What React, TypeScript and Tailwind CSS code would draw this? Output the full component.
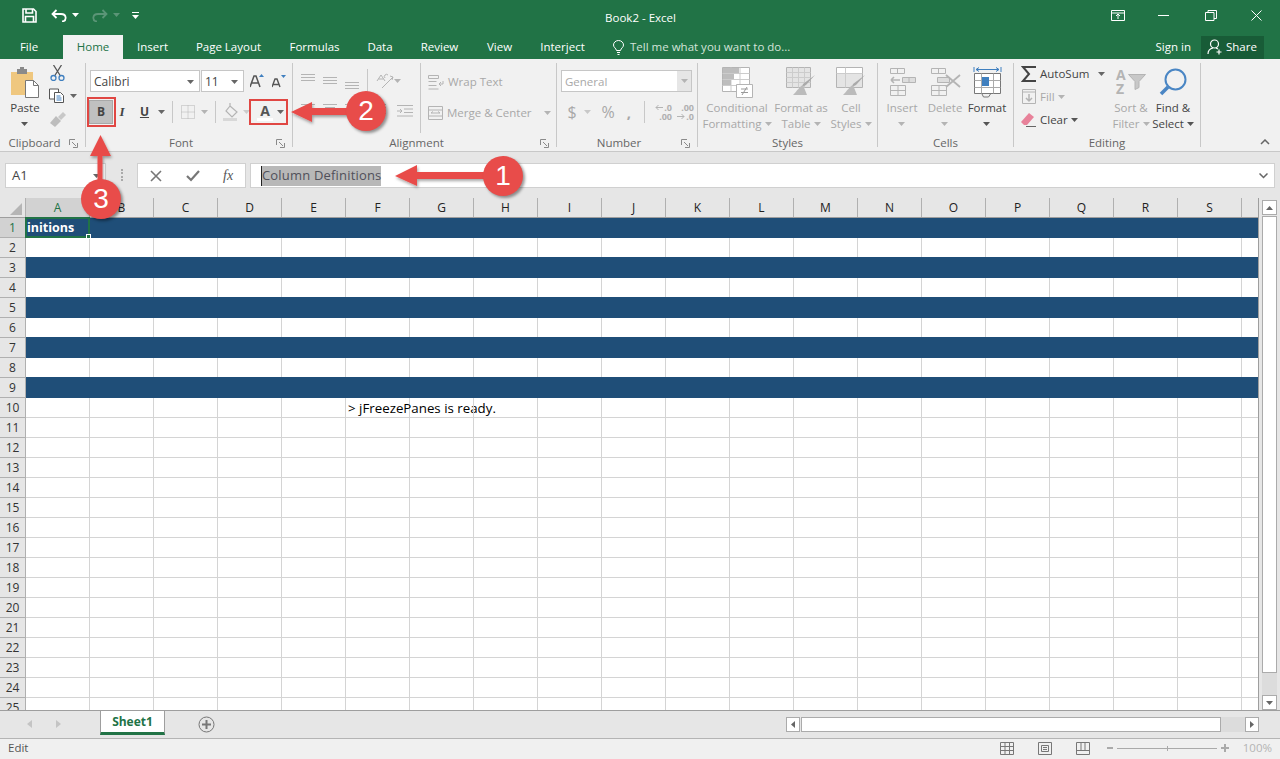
import type { ReactNode } from "react";

const UI = "font-['Open_Sans',sans-serif]";
const GREY = "#b4b4b4";
const COLS = "ABCDEFGHIJKLMNOPQRS".split("");
const ROWS = Array.from({ length: 25 }, (_, i) => i + 1);

function Caret({ color = "#666", className = "" }: { color?: string; className?: string }) {
  return (
    <svg width="7" height="4" viewBox="0 0 7 4" className={`shrink-0 ${className}`}>
      <path d="M0 0h7L3.500 4z" fill={color} />
    </svg>
  );
}

function Launcher() {
  return (
    <svg width="9" height="9" viewBox="0 0 9 9" fill="none" stroke="#8a8a8a">
      <path d="M.5 6V.5H6" />
      <path d="M3 3l4 4M8.500 4v4.500H4" />
    </svg>
  );
}

function Group({ w, label, launcher, children }: { w: string; label: string; launcher?: boolean; children: ReactNode }) {
  return (
    <div className={`${w} flex flex-col shrink-0`}>
      <div className="h-[76px] flex">{children}</div>
      {launcher ? (
        <div className="grid grid-cols-[1fr_16px] items-center h-[16px]">
          <span className="text-center text-[11.500px] text-[#666] leading-none">{label}</span>
          <span className="flex">
            <Launcher />
          </span>
        </div>
      ) : (
        <div className="h-[16px] flex items-center justify-center text-[11.500px] text-[#666] leading-none">{label}</div>
      )}
    </div>
  );
}

function Sep() {
  return <div className="w-px h-[84px] mt-[4px] bg-[#c8c8c8] shrink-0" />;
}

function BigButton({ w, icon, lines, dim, caretLine }: { w: string; icon: ReactNode; lines: string[]; dim?: boolean; caretLine?: boolean }) {
  const color = dim ? "text-[#a8a8a8]" : "text-[#444]";
  const caret = dim ? "#b4b4b4" : "#555";
  return (
    <div className={`${w} flex flex-col items-center shrink-0 pt-[5px]`}>
      <div className="h-[36px] flex items-center justify-center">{icon}</div>
      <div className={`text-[11.500px] leading-[16px] text-center whitespace-nowrap ${color}`}>
        <div>{lines[0]}</div>
        {caretLine ? (
          <div className="h-[16px] flex items-center justify-center">
            <Caret color={caret} />
          </div>
        ) : (
          <div className="flex items-center justify-center gap-[3px]">
            {lines[1]}
            <Caret color={caret} />
          </div>
        )}
      </div>
    </div>
  );
}

function TitleBar() {
  return (
    <div className="h-[35px] flex items-center">
      <div className="flex items-center pl-[22px] h-full pb-[5px]">
        <svg width="15" height="15" viewBox="0 0 15 15" fill="none" stroke="#fff" strokeWidth="1.600">
          <path d="M1 1h10.500L14 3.500V14H1z" />
          <path d="M4 1v4h6.500V1M3.500 14V8.500h8V14" />
        </svg>
        <svg width="16" height="13" viewBox="0 0 16 13" fill="none" stroke="#fff" strokeWidth="1.800" className="ml-[14px]">
          <path d="M5.500 1L1.500 5l4 4M2 5h8c6 0 6 7 1 7.500" />
        </svg>
        <Caret color="#fff" className="ml-[5px]" />
        <svg width="16" height="13" viewBox="0 0 16 13" fill="none" stroke="#5b9577" strokeWidth="1.800" className="ml-[13px]">
          <path d="M10.500 1l4 4-4 4M14 5H6c-6 0-6 7-1 7.500" />
        </svg>
        <Caret color="#5b9577" className="ml-[5px]" />
        <svg width="7" height="7" viewBox="0 0 7 7" className="ml-[12px]" fill="#fff">
          <path d="M0 0h7v1H0zM0 3h7L3.500 7z" />
        </svg>
      </div>
      <div className="flex-1 text-center text-white text-[11.500px] pl-[31px]">Book2 - Excel</div>
      <div className="flex items-center pb-[5px]">
        <svg width="14" height="11" viewBox="0 0 14 11" fill="none" stroke="#fff">
          <path d="M.5.500h13v10H.500zM.5 3h13M7 9V4.500M5 6l2-2 2 2" />
        </svg>
        <div className="ml-[33px] w-[11px] h-px bg-white" />
        <svg width="12" height="11" viewBox="0 0 12 11" fill="none" stroke="#fff" className="ml-[36px]">
          <path d="M.5 2.500h8.500v8H.5zM3 2.500V.5h8.500v8H9" />
        </svg>
        <svg width="11" height="11" viewBox="0 0 11 11" fill="none" stroke="#fff" className="ml-[34px] mr-[18px]">
          <path d="M.5.500l10 10M10.500.500l-10 10" />
        </svg>
      </div>
    </div>
  );
}

function TabBar() {
  const tabs: [string, string][] = [
    ["Insert", "w-[59px]"],
    ["Page Layout", "w-[93px]"],
    ["Formulas", "w-[79px]"],
    ["Data", "w-[52px]"],
    ["Review", "w-[67px]"],
    ["View", "w-[53px]"],
    ["Interject", "w-[73px]"],
  ];
  return (
    <div className="h-[24px] flex items-center text-[11.500px] text-white">
      <div className="w-[58px] text-center">File</div>
      <div className="w-[60px] ml-[5px] h-full flex items-center justify-center bg-[#f1f1f1] text-[#217346]">Home</div>
      {tabs.map(([t, w]) => (
        <div key={t} className={`${w} text-center`}>
          {t}
        </div>
      ))}
      <svg width="11" height="15" viewBox="0 0 11 15" fill="none" stroke="#fff" className="ml-[14px]">
        <path d="M3.500 10.500C3 8 .5 7.500.5 5a5 4.500 0 0 1 10 0c0 2.500-2.500 3-3 5.500zM4 12.500h3M4.500 14.500h2" />
      </svg>
      <div className="ml-[6px] text-[#d4e4da]">Tell me what you want to do...</div>
      <div className="flex-1" />
      <div>Sign in</div>
      <div className="w-[63px] h-[23px] ml-[10px] mr-[16px] bg-[#185c37] flex items-center gap-[3px] pl-[6px]">
        <svg width="16" height="16" viewBox="0 0 16 16" fill="none" stroke="#fff" strokeWidth="1.200">
          <circle cx="7.500" cy="5" r="4" />
          <path d="M1 15c0-3.500 2.500-5.500 5-6M9 9l2 1M12 10.500v5M9.500 13h5" />
        </svg>
        Share
      </div>
    </div>
  );
}

function PasteIcon() {
  return (
    <svg width="30" height="31" viewBox="0 0 30 31">
      <path d="M1 5h22v23H1z" fill="#efc77f" />
      <path d="M7 2h10v5H7z" fill="#8a8a8a" />
      <path d="M10 0h4v3h-4z" fill="#8a8a8a" />
      <path d="M15.500 13.500h8l5 5v12h-13z" fill="#fff" stroke="#777" />
      <path d="M23.500 13.500v5h5" fill="none" stroke="#777" />
    </svg>
  );
}

function Clipboard() {
  return (
    <Group w="w-[85px]" label="Clipboard" launcher>
      <BigButton w="w-[44px] ml-[3px]" icon={<PasteIcon />} lines={["Paste", ""]} caretLine />
      <div className="flex flex-col pl-[2px] pt-[6px]">
        <svg width="15" height="16" viewBox="0 0 15 16" fill="none" className="ml-px">
          <path d="M3.500 0l7 11M11.500 0l-7 11" stroke="#555" strokeWidth="1.300" />
          <circle cx="3.500" cy="13" r="2.500" stroke="#3f7fbf" strokeWidth="1.300" />
          <circle cx="11.500" cy="13" r="2.500" stroke="#3f7fbf" strokeWidth="1.300" />
        </svg>
        <div className="flex items-center mt-[7px]">
          <svg width="16" height="15" viewBox="0 0 16 15" fill="#fff" stroke="#555">
            <path d="M.5 1h9v10h-9z" />
            <path d="M5.500 4.500h6l3 3v7h-9z" />
            <path d="M7.500 8h4M7.500 10h5M7.500 12h5" stroke="#3f7fbf" />
          </svg>
          <Caret className="ml-[5px]" />
        </div>
        <svg width="17" height="15" viewBox="0 0 17 15" className="mt-[9px]" fill="#bdbdbd">
          <path d="M9 5l5-5 3 3-5 5z" fill="#c8c8c8" />
          <path d="M1 11l6-7 5 5-6 6z" />
        </svg>
      </div>
    </Group>
  );
}

function FontGroup() {
  return (
    <Group w="w-[206px]" label="Font" launcher>
      <div className="flex flex-col pt-[11px]">
        <div className="flex items-center pl-[4px] h-[22px]">
          <div className="w-[110px] h-full bg-white border border-[#c6c6c6] flex items-center justify-between pl-[3px] pr-[5px] pt-px text-[12px] text-[#444]">
            Calibri
            <Caret />
          </div>
          <div className="w-[43px] h-full ml-px bg-white border border-[#c6c6c6] flex items-center justify-between pl-[3px] pr-[5px] pt-px text-[12px] text-[#444]">
            11
            <Caret />
          </div>
          <svg width="14" height="14" viewBox="0 0 14 14" className="ml-[6px]">
            <path d="M0 13L4 2h2l4 11M2 9h6" fill="none" stroke="#555" strokeWidth="1.500" />
            <path d="M9 3l2.500-3L14 3z" fill="#3f7fbf" />
          </svg>
          <svg width="14" height="13" viewBox="0 0 14 13" className="ml-[8px]">
            <path d="M0 12L3 4h2l3 8M1.500 9.500h5" fill="none" stroke="#555" strokeWidth="1.400" />
            <path d="M9 0h5l-2.500 3z" fill="#3f7fbf" />
          </svg>
        </div>
        <div className="flex items-center pl-[3px] h-[26px] mt-[7px]">
          <div className="w-[24px] h-[24px] bg-[#c0c0c0] border border-[#a8a8a8] flex items-center justify-center text-[12px] font-bold text-[#444]">
            B
          </div>
          <span className="w-[18px] text-center text-[13px] italic text-[#444] font-['Liberation_Serif',serif] font-bold">I</span>
          <span className="w-[27px] text-center text-[12px] font-bold underline text-[#444]">U</span>
          <Caret />
          <div className="w-px h-[22px] bg-[#c8c8c8] ml-[7px]" />
          <svg width="14" height="14" viewBox="0 0 14 14" fill="none" stroke={GREY} strokeDasharray="1 1" className="ml-[8px]">
            <path d="M.5.500h13v13H.500zM7 .5v13M.5 7h13" />
          </svg>
          <Caret color={GREY} className="ml-[6px]" />
          <div className="w-px h-[22px] bg-[#c8c8c8] ml-[7px]" />
          <svg width="17" height="18" viewBox="0 0 17 18" className="ml-[7px]" fill="none">
            <path d="M7 3l7 6-5 5-6-6zM7 3V0" stroke={GREY} strokeWidth="1.200" />
            <path d="M0 15h14v3H0z" fill="#d8d8d8" />
          </svg>
          <Caret color="#ccc" className="ml-[3px]" />
          <div className="ml-[3px] w-[24px] flex flex-col items-center text-[14px] leading-[15px] font-bold text-[#555]">
            A
            <div className="w-[16px] h-[3px] bg-white" />
          </div>
          <Caret />
        </div>
      </div>
    </Group>
  );
}

function AlignLines({ rows, className = "" }: { rows: [number, number, number][]; className?: string }) {
  return (
    <svg width="14" height="17" viewBox="0 0 14 17" stroke={GREY} className={`shrink-0 ${className}`}>
      {rows.map(([y, a, b]) => (
        <path key={y} d={`M${a} ${y + 0.5}H${b}`} />
      ))}
    </svg>
  );
}

function AlignmentGroup() {
  const line = (a: number, b: number, c: number) =>
    [
      [a, 0, 14],
      [b, 0, 14],
      [c, 0, 14],
    ] as [number, number, number][];
  return (
    <Group w="w-[263px]" label="Alignment" launcher>
      <div className="w-[127px] pl-[8px] pt-[13px] shrink-0">
        <div className="flex items-center h-[17px]">
          <AlignLines rows={line(2, 5, 8)} />
          <AlignLines rows={line(5, 8, 11)} className="ml-[8px]" />
          <AlignLines rows={line(10, 13, 16)} className="ml-[8px]" />
          <div className="w-px h-[24px] bg-[#c8c8c8] ml-[8px] shrink-0" />
          <svg width="18" height="17" viewBox="0 0 18 17" fill="none" stroke={GREY} className="ml-[8px] shrink-0">
            <path d="M1 9l4-6 4 6M2.500 7h5M9 6a2 2 0 1 1 3-3" />
            <path d="M6 16L17 5M14 4l3 1-1 3" />
          </svg>
          <Caret color={GREY} />
        </div>
        <div className="flex items-center h-[14px] mt-[15px]">
          <AlignLines rows={[[1, 0, 14], [4, 0, 10], [7, 0, 14], [10, 0, 10]]} />
          <AlignLines rows={[[1, 0, 14], [4, 2, 12], [7, 0, 14], [10, 2, 12]]} className="ml-[8px]" />
          <AlignLines rows={[[1, 0, 14], [4, 4, 14], [7, 0, 14], [10, 4, 14]]} className="ml-[8px]" />
          <AlignLines rows={[[1, 0, 14], [4, 6, 14], [7, 6, 14], [10, 0, 14]]} className="ml-[13px]" />
          <svg width="16" height="14" viewBox="0 0 16 14" fill="none" stroke={GREY} className="ml-[11px] shrink-0">
            <path d="M0 1.500h16M7 5h9M7 8.500h9M0 12h16M0 7h5M3 5l2 2-2 2" />
          </svg>
        </div>
      </div>
      <div className="w-px h-[70px] mt-[4px] bg-[#c8c8c8] shrink-0" />
      <div className="flex flex-col pl-[7px] pt-[13px] text-[11.500px] text-[#a8a8a8]">
        <div className="flex items-center gap-[4px] h-[20px]">
          <svg width="16" height="15" viewBox="0 0 16 15" fill="none" stroke={GREY}>
            <path d="M.5.500h10v3H.500zM.5 6.500h8M.5 10.500h8M.5 14h10M15 6v3h-4M13 7l-2 2 2 2" />
          </svg>
          Wrap Text
        </div>
        <div className="flex items-center gap-[4px] h-[20px] mt-[11px]">
          <svg width="15" height="14" viewBox="0 0 15 14" fill="none" stroke={GREY}>
            <path d="M.5.500h14v13H.500zM.5 4h14M.5 10h14M3 7h9M3 7l2-1.500M12 7l-2-1.500" />
          </svg>
          Merge &amp; Center
          <Caret color={GREY} className="ml-[8px]" />
        </div>
      </div>
    </Group>
  );
}

function DecimalIcon({ top, bottom, arrowTop }: { top: string; bottom: string; arrowTop: boolean }) {
  const arrow = (
    <svg width="8" height="7" viewBox="0 0 8 7" fill="none" stroke={GREY} className="shrink-0">
      {arrowTop ? <path d="M8 3.500H1M3.500 1L1 3.500 3.500 6" /> : <path d="M0 3.500h7M4.500 1L7 3.500 4.500 6" />}
    </svg>
  );
  return (
    <div className="w-[20px] flex flex-col items-end text-[9px] leading-[8px] font-bold text-[#b0b0b0]">
      <div className="flex items-center gap-px">
        {arrowTop && arrow}
        {top}
      </div>
      <div className="flex items-center gap-px mt-px">
        {!arrowTop && arrow}
        {bottom}
      </div>
    </div>
  );
}

function NumberGroup() {
  return (
    <Group w="w-[140px]" label="Number" launcher>
      <div className="flex flex-col pl-[4px] pt-[11px] text-[#a8a8a8]">
        <div className="w-[131px] h-[22px] bg-white border border-[#c6c6c6] flex items-center justify-between pl-[3px] text-[11.500px]">
          <span className="pt-px">General</span>
          <div className="w-[14px] h-full bg-[#e6e6e6] flex items-center justify-center">
            <Caret color={GREY} />
          </div>
        </div>
        <div className="flex items-center h-[24px] mt-[8px]">
          <span className="w-[22px] text-center text-[16px]">$</span>
          <Caret color="#c8c8c8" className="ml-px" />
          <span className="w-[30px] ml-[2px] text-center text-[16px]">%</span>
          <span className="w-[12px] text-center text-[15px] font-bold">,</span>
          <div className="w-px h-[22px] bg-[#c8c8c8] ml-[9px]" />
          <div className="ml-[7px]">
            <DecimalIcon top=".0" bottom=".00" arrowTop />
          </div>
          <div className="ml-[2px]">
            <DecimalIcon top=".00" bottom=".0" arrowTop={false} />
          </div>
        </div>
      </div>
    </Group>
  );
}

function CondIcon() {
  return (
    <svg width="31" height="31" viewBox="0 0 31 31">
      <path d="M.5.500h27v24H.500z" fill="#fff" stroke={GREY} />
      <path d="M9 .5v24M18 .5v24M.5 6.500h27M.5 12.500h27M.5 18.500h27" stroke="#ccc" />
      <path d="M1 1h16v5H1zM1 7h11v5H1zM1 13h8v5H1z" fill="#bdbdbd" />
      <path d="M14.500 17.500h16v13h-16z" fill="#fff" stroke={GREY} />
      <path d="M19 22h7M19 25.500h7M25 20l-5 8" stroke="#999" fill="none" />
    </svg>
  );
}

function TableIcon() {
  return (
    <svg width="30" height="30" viewBox="0 0 30 30">
      <path d="M.5.500h24v20H.500z" fill="#e4e4e4" stroke={GREY} />
      <path d="M6.500.5v20M12.500.5v20M18.500.5v20M.5 5.500h24M.5 10.500h24M.5 15.500h24" stroke="#ccc" />
      <path d="M29 8l-9 10-4 2 1-3z" fill="#aaa" />
      <path d="M17 18c-3 1-6 6-10 10h14z" fill="#bbb" />
    </svg>
  );
}

function StylesIcon() {
  return (
    <svg width="30" height="30" viewBox="0 0 30 30">
      <path d="M.5.500h26v20H.500z" fill="#fff" stroke={GREY} />
      <path d="M1 6h25v14H1z" fill="#e4e4e4" />
      <path d="M9.500.5v20M.5 6.500h26" stroke="#ccc" />
      <path d="M29 8l-9 10-4 2 1-3z" fill="#aaa" />
      <path d="M17 18c-3 1-6 6-10 10h14z" fill="#bbb" />
    </svg>
  );
}

function StylesGroup() {
  return (
    <Group w="w-[179px]" label="Styles">
      <BigButton w="w-[78px]" dim icon={<CondIcon />} lines={["Conditional", "Formatting"]} />
      <BigButton w="w-[50px]" dim icon={<TableIcon />} lines={["Format as", "Table"]} />
      <BigButton w="w-[50px]" dim icon={<StylesIcon />} lines={["Cell", "Styles"]} />
    </Group>
  );
}

function InsertIcon() {
  return (
    <svg width="27" height="28" viewBox="0 0 27 28" fill="none" stroke={GREY}>
      <path d="M1.500.5h14v5h-14zM8.500.5v5M1.500 17.500h15v10h-15zM9 17.500v10M1.500 22.500h15" />
      <path d="M13.500 9.500h13v5h-13zM20 9.500v5" fill="#ddd" />
      <path d="M2 12h9M2 12l3-3M2 12l3 3" strokeWidth="1.600" />
    </svg>
  );
}

function DeleteIcon() {
  return (
    <svg width="31" height="28" viewBox="0 0 31 28" fill="none" stroke={GREY}>
      <path d="M1.500.5h14v5h-14zM8.500.5v5M1.500 17.500h15v10h-15zM9 17.500v10M1.500 22.500h15" />
      <path d="M7.500 9.500h12v5h-12z" fill="#ddd" />
      <path d="M16 7l14 12M30 7L16 19" strokeWidth="1.800" />
    </svg>
  );
}

function FormatIcon() {
  return (
    <svg width="29" height="32" viewBox="0 0 29 32" fill="none">
      <path d="M1 1v5M28 1v5M3 3.500h23" stroke="#3f7fbf" />
      <path d="M3 3.500l3-2M3 3.500l3 2M26 3.500l-3-2M26 3.500l-3 2" stroke="#3f7fbf" />
      <path d="M1.500 7.500h26v20h-26z" fill="#fff" stroke="#777" />
      <path d="M8.500 7.500v20M20.500 7.500v20M1.500 14.500h26M1.500 21.500h26" stroke="#aaa" />
      <path d="M9 11h7v9H9z" fill="#3f7fbf" />
      <path d="M9 28l1.500 3h5l2-3" stroke="#777" />
    </svg>
  );
}

function CellsGroup() {
  return (
    <Group w="w-[135px]" label="Cells">
      <BigButton w="w-[48px]" dim icon={<InsertIcon />} lines={["Insert", ""]} caretLine />
      <BigButton w="w-[38px]" dim icon={<DeleteIcon />} lines={["Delete", ""]} caretLine />
      <BigButton w="w-[46px]" icon={<FormatIcon />} lines={["Format", ""]} caretLine />
    </Group>
  );
}

function EditingGroup() {
  return (
    <Group w="w-[186px]" label="Editing">
      <div className="w-[94px] flex flex-col pl-[7px] pt-[3px] text-[11.500px] shrink-0">
        <div className="flex items-center h-[23px] text-[#444]">
          <svg width="15" height="16" viewBox="0 0 15 16" fill="none" stroke="#444" strokeWidth="2">
            <path d="M15 1H2l6 7-6 7h13" />
          </svg>
          <span className="ml-[4px] w-[58px]">AutoSum</span>
          <Caret />
        </div>
        <div className="flex items-center h-[23px] text-[#a8a8a8]">
          <svg width="14" height="15" viewBox="0 0 14 15" fill="none" stroke={GREY} className="ml-px">
            <path d="M.5.500h13v14H.500zM.5 3h13" />
            <path d="M7 5v7M4 9l3 3 3-3" strokeWidth="1.500" />
          </svg>
          <span className="ml-[4px]">Fill</span>
          <Caret color={GREY} className="ml-[3px]" />
        </div>
        <div className="flex items-center h-[23px] text-[#444]">
          <svg width="15" height="14" viewBox="0 0 15 14">
            <path d="M0 9l8-9 5 4-7 8H3z" fill="#e8829a" />
            <path d="M5 13.500h10" stroke="#666" />
          </svg>
          <span className="ml-[4px]">Clear</span>
          <Caret color="#555" className="ml-[3px]" />
        </div>
      </div>
      <BigButton
        w="w-[46px]"
        dim
        icon={
          <div className="flex items-center w-[30px]">
            <div className="flex flex-col w-[12px] text-[14px] leading-[14px] font-bold text-[#b4b4b4]">
              <span>A</span>
              <span>Z</span>
            </div>
            <svg width="18" height="16" viewBox="0 0 18 16" className="shrink-0">
              <path d="M.5.500h17l-6.500 7v6l-4 2v-8z" fill="#c8c8c8" stroke={GREY} />
            </svg>
          </div>
        }
        lines={["Sort &", "Filter"]}
      />
      <BigButton
        w="w-[38px]"
        icon={
          <svg width="28" height="28" viewBox="0 0 28 28" fill="none" stroke="#4a86c4">
            <circle cx="16.500" cy="11.500" r="10" strokeWidth="2" />
            <path d="M9 19l-7 7" strokeWidth="3.500" />
          </svg>
        }
        lines={["Find &", "Select"]}
      />
    </Group>
  );
}

function Ribbon() {
  return (
    <div className="h-[93px] flex bg-[#f1f1f1] border-b border-[#c8c8c8] shrink-0">
      <Clipboard />
      <Sep />
      <FontGroup />
      <Sep />
      <AlignmentGroup />
      <Sep />
      <NumberGroup />
      <Sep />
      <StylesGroup />
      <Sep />
      <CellsGroup />
      <Sep />
      <EditingGroup />
      <Sep />
      <div className="flex-1 flex items-end justify-end pr-[10px] pb-[6px]">
        <svg width="10" height="6" viewBox="0 0 10 6" fill="none" stroke="#666" strokeWidth="1.500">
          <path d="M1 5l4-4 4 4" />
        </svg>
      </div>
    </div>
  );
}

function FormulaBar() {
  return (
    <div className="h-[46px] bg-[#e6e6e6] flex items-start pt-[11px] pl-[5px] pr-[5px] shrink-0">
      <div className="w-[101px] h-[25px] bg-white border border-[#d0d0d0] flex items-center justify-between pl-[6px] pr-[5px] text-[13px] text-[#444]">
        A1
        <Caret />
      </div>
      <div className="w-[3px] h-[12px] ml-[15px] mt-[6px] border-l-2 border-dotted border-[#aaa]" />
      <div className="w-[109px] h-[25px] ml-[13px] bg-white border border-[#d0d0d0] flex items-center text-[#777]">
        <svg width="12" height="12" viewBox="0 0 12 12" fill="none" stroke="#777" strokeWidth="1.600" className="ml-[12px]">
          <path d="M1 1l10 10M11 1L1 11" />
        </svg>
        <svg width="14" height="12" viewBox="0 0 14 12" fill="none" stroke="#777" strokeWidth="2.200" className="ml-[24px]">
          <path d="M1 6l4 4 8-9" />
        </svg>
        <span className="ml-[23px] text-[14px] italic font-['Liberation_Serif',serif] text-[#555]">fx</span>
      </div>
      <div className="flex-1 h-[25px] ml-[4px] bg-white border border-[#d0d0d0] flex items-center pl-[10px] justify-between pr-[6px]">
        <div className="h-[20px] bg-[#b8b8b8] border-l border-[#222] flex items-center pt-px text-[13px] tracking-[0.18px] text-[#50505a] whitespace-nowrap">
          Column Definitions
        </div>
        <svg width="9" height="6" viewBox="0 0 9 6" fill="none" stroke="#666" strokeWidth="1.500">
          <path d="M.5.500l4 4 4-4" />
        </svg>
      </div>
    </div>
  );
}

function ColumnHeader() {
  return (
    <div className="h-[20px] flex bg-[#e6e6e6] border-b border-[#9e9e9e] shrink-0">
      <div className="w-[26px] h-full flex items-end justify-end pr-[3px] pb-[2px] shrink-0 border-r border-[#b0b0b0]">
        <svg width="12" height="12" viewBox="0 0 12 12">
          <path d="M12 0v12H0z" fill="#b5b5b5" />
        </svg>
      </div>
      {COLS.map((c, i) => (
        <div
          key={c}
          className={`w-[64px] shrink-0 flex items-center justify-center text-[12px] border-r border-[#b0b0b0] ${
            i === 0 ? "bg-[#d2d2d2] text-[#217346]" : "text-[#222]"
          }`}
        >
          {c}
        </div>
      ))}
    </div>
  );
}

function Row({ n }: { n: number }) {
  const blue = n < 10 && n % 2 === 1;
  return (
    <div className="h-[20px] flex shrink-0">
      <div
        className={`w-[26px] shrink-0 flex items-center justify-center text-[12px] border-r border-b border-[#b0b0b0] ${
          n === 1 ? "bg-[#d2d2d2] text-[#217346]" : "bg-[#e6e6e6] text-[#333]"
        }`}
      >
        {n}
      </div>
      {blue ? (
        <div className={`flex-1 bg-[#1f4e78] relative ${n === 1 ? "h-[20px]" : "h-[21px] -mt-px"}`}>
          {n === 1 && (
            <div className="absolute left-[-1px] top-[-1px] w-[65px] h-[21px] border-2 border-[#217346] flex items-center pt-[2px] text-white font-bold text-[12.500px] leading-none">
              initions
              <div className="absolute right-[-3px] bottom-[-3px] w-[5px] h-[5px] bg-[#217346] border border-white" />
            </div>
          )}
        </div>
      ) : (
        <>
          {COLS.map((c) => (
            <div key={c} className="w-[64px] shrink-0 border-r border-b border-[#d4d4d4]">
              {n === 10 && c === "F" && (
                <div className="pl-[2px] text-[13.300px] leading-[20px] text-black whitespace-nowrap">&gt; jFreezePanes is ready.</div>
              )}
            </div>
          ))}
          <div className="flex-1 border-b border-[#d4d4d4]" />
        </>
      )}
    </div>
  );
}

function VerticalScrollbar() {
  return (
    <div className="w-[21px] shrink-0 bg-[#e6e6e6] flex flex-col items-start pl-[3px] pt-[2px]">
      <div className="w-[15px] h-[15px] bg-white border border-[#ababab] flex items-center justify-center">
        <svg width="7" height="4" viewBox="0 0 7 4"><path d="M3.500 0L7 4H0z" fill="#666" /></svg>
      </div>
      <div className="w-[15px] flex-1 mt-px bg-white border border-[#ababab]" />
      <div className="w-[15px] h-[22px] bg-[#dcdcdc]" />
      <div className="w-[15px] h-[15px] bg-white border border-[#ababab] flex items-center justify-center">
        <Caret />
      </div>
    </div>
  );
}

function SheetArea() {
  return (
    <div className="flex h-[513px] shrink-0 border-b border-[#9e9e9e]">
      <div className="flex-1 flex flex-col overflow-hidden border-r border-[#9e9e9e]">
        <ColumnHeader />
        {ROWS.map((n) => (
          <Row key={n} n={n} />
        ))}
      </div>
      <VerticalScrollbar />
    </div>
  );
}

function SheetBar() {
  return (
    <div className="h-[28px] flex bg-[#e6e6e6] border-b border-[#b4b4b4] shrink-0">
      <div className="flex items-center w-[100px] pl-[27px] pb-[2px]">
        <svg width="5" height="8" viewBox="0 0 5 8"><path d="M5 0v8L0 4z" fill="#c4c4c4" /></svg>
        <svg width="5" height="8" viewBox="0 0 5 8" className="ml-[24px]"><path d="M0 0v8l5-4z" fill="#c4c4c4" /></svg>
      </div>
      <div className="w-[65px] h-[24px] bg-white border-x border-[#9e9e9e] border-b-[3px] border-b-[#217346] flex items-center justify-center pt-px text-[12px] font-bold text-[#217346]">
        Sheet1
      </div>
      <div className="flex items-center pl-[33px] pb-px flex-1">
        <svg width="17" height="17" viewBox="0 0 17 17" fill="none" stroke="#777">
          <circle cx="8.500" cy="8.500" r="7.500" />
          <path d="M8.500 4v9M4 8.500h9" strokeWidth="2" />
        </svg>
      </div>
      <div className="w-[473px] h-[15px] mt-[6px] mr-[21px] flex">
        <div className="w-[14px] h-full bg-white border border-[#ababab] flex items-center justify-center">
          <svg width="4" height="7" viewBox="0 0 4 7"><path d="M4 0v7L0 3.500z" fill="#666" /></svg>
        </div>
        <div className="w-[420px] h-full ml-px bg-white border border-[#ababab]" />
        <div className="flex-1 bg-[#dcdcdc]" />
        <div className="w-[14px] h-full bg-white border border-[#ababab] flex items-center justify-center">
          <svg width="4" height="7" viewBox="0 0 4 7"><path d="M0 0v7l4-3.500z" fill="#666" /></svg>
        </div>
      </div>
    </div>
  );
}

function StatusBar() {
  return (
    <div className="flex-1 flex items-center bg-[#f0f0f0] text-[11.500px] text-[#555] pb-[2px]">
      <div className="pl-[8px] flex-1">Edit</div>
      <svg width="14" height="13" viewBox="0 0 14 13" fill="none" stroke="#777">
        <path d="M.5.500h13v12H.500zM5 .5v12M9.500.5v12M.5 4.500h13M.5 8.500h13" />
      </svg>
      <svg width="14" height="13" viewBox="0 0 14 13" fill="none" stroke="#777" className="ml-[24px]">
        <path d="M.5.500h13v12H.500zM3.500 3.500h7v6h-7zM5 5.500h4M5 7.500h4" />
      </svg>
      <svg width="14" height="13" viewBox="0 0 14 13" fill="none" stroke="#777" className="ml-[24px]">
        <path d="M.5.500h13v12H.500zM.5 8.500h13M5 .5v8M9 .5v8" />
      </svg>
      <div className="w-[6px] h-[2px] bg-[#aaa] ml-[17px]" />
      <div className="w-[100px] h-px bg-[#aaa] ml-[4px] flex justify-center">
        <div className="w-px h-[5px] -mt-[2px] bg-[#aaa]" />
      </div>
      <svg width="8" height="8" viewBox="0 0 8 8" fill="#aaa" className="ml-[4px]">
        <path d="M3 0h2v3h3v2H5v3H3V5H0V3h3z" />
      </svg>
      <div className="w-[51px] text-right pr-[8px] text-[#b4b4b4]">100%</div>
    </div>
  );
}

function Callouts() {
  const badge = "absolute w-[40px] h-[40px] rounded-full bg-[#e84c4a] text-white text-[28px] leading-[40px] text-center font-['Liberation_Sans',sans-serif] shadow-[2px_2px_3px_rgba(0,0,0,0.4)]";
  return (
    <>
      <div className="absolute left-[87px] top-[97px] w-[29px] h-[30px] border-2 border-[#e04743]" />
      <div className="absolute left-[249px] top-[99px] w-[39px] h-[26px] border-2 border-[#e04743]" />
      <svg width="1280" height="759" viewBox="0 0 1280 759" className="absolute left-0 top-0 pointer-events-none">
        <defs>
          <filter id="sh" x="-20%" y="-20%" width="140%" height="140%">
            <feDropShadow dx="1" dy="2" stdDeviation="1.500" floodColor="#000" floodOpacity="0.35" />
          </filter>
        </defs>
        <g fill="#e84c4a" filter="url(#sh)">
          <path d="M395 176l22-11v7h70v7h-70v7z" />
          <path d="M291 112l21-10v6h38v7h-38v7z" />
          <path d="M100.500 135l10.500 21h-8.500v30h-5v-30H90z" />
        </g>
      </svg>
      <div className={`${badge} left-[483px] top-[156px]`}>1</div>
      <div className={`${badge} left-[346px] top-[91px]`}>2</div>
      <div className={`${badge} left-[81px] top-[179px]`}>3</div>
    </>
  );
}

export default function App() {
  return (
    <div className={`relative w-[1280px] h-[759px] overflow-hidden flex flex-col bg-white ${UI}`}>
      <div className="h-[59px] bg-[#217346] shrink-0 flex flex-col">
        <TitleBar />
        <TabBar />
      </div>
      <Ribbon />
      <FormulaBar />
      <SheetArea />
      <SheetBar />
      <StatusBar />
      <Callouts />
    </div>
  );
}
